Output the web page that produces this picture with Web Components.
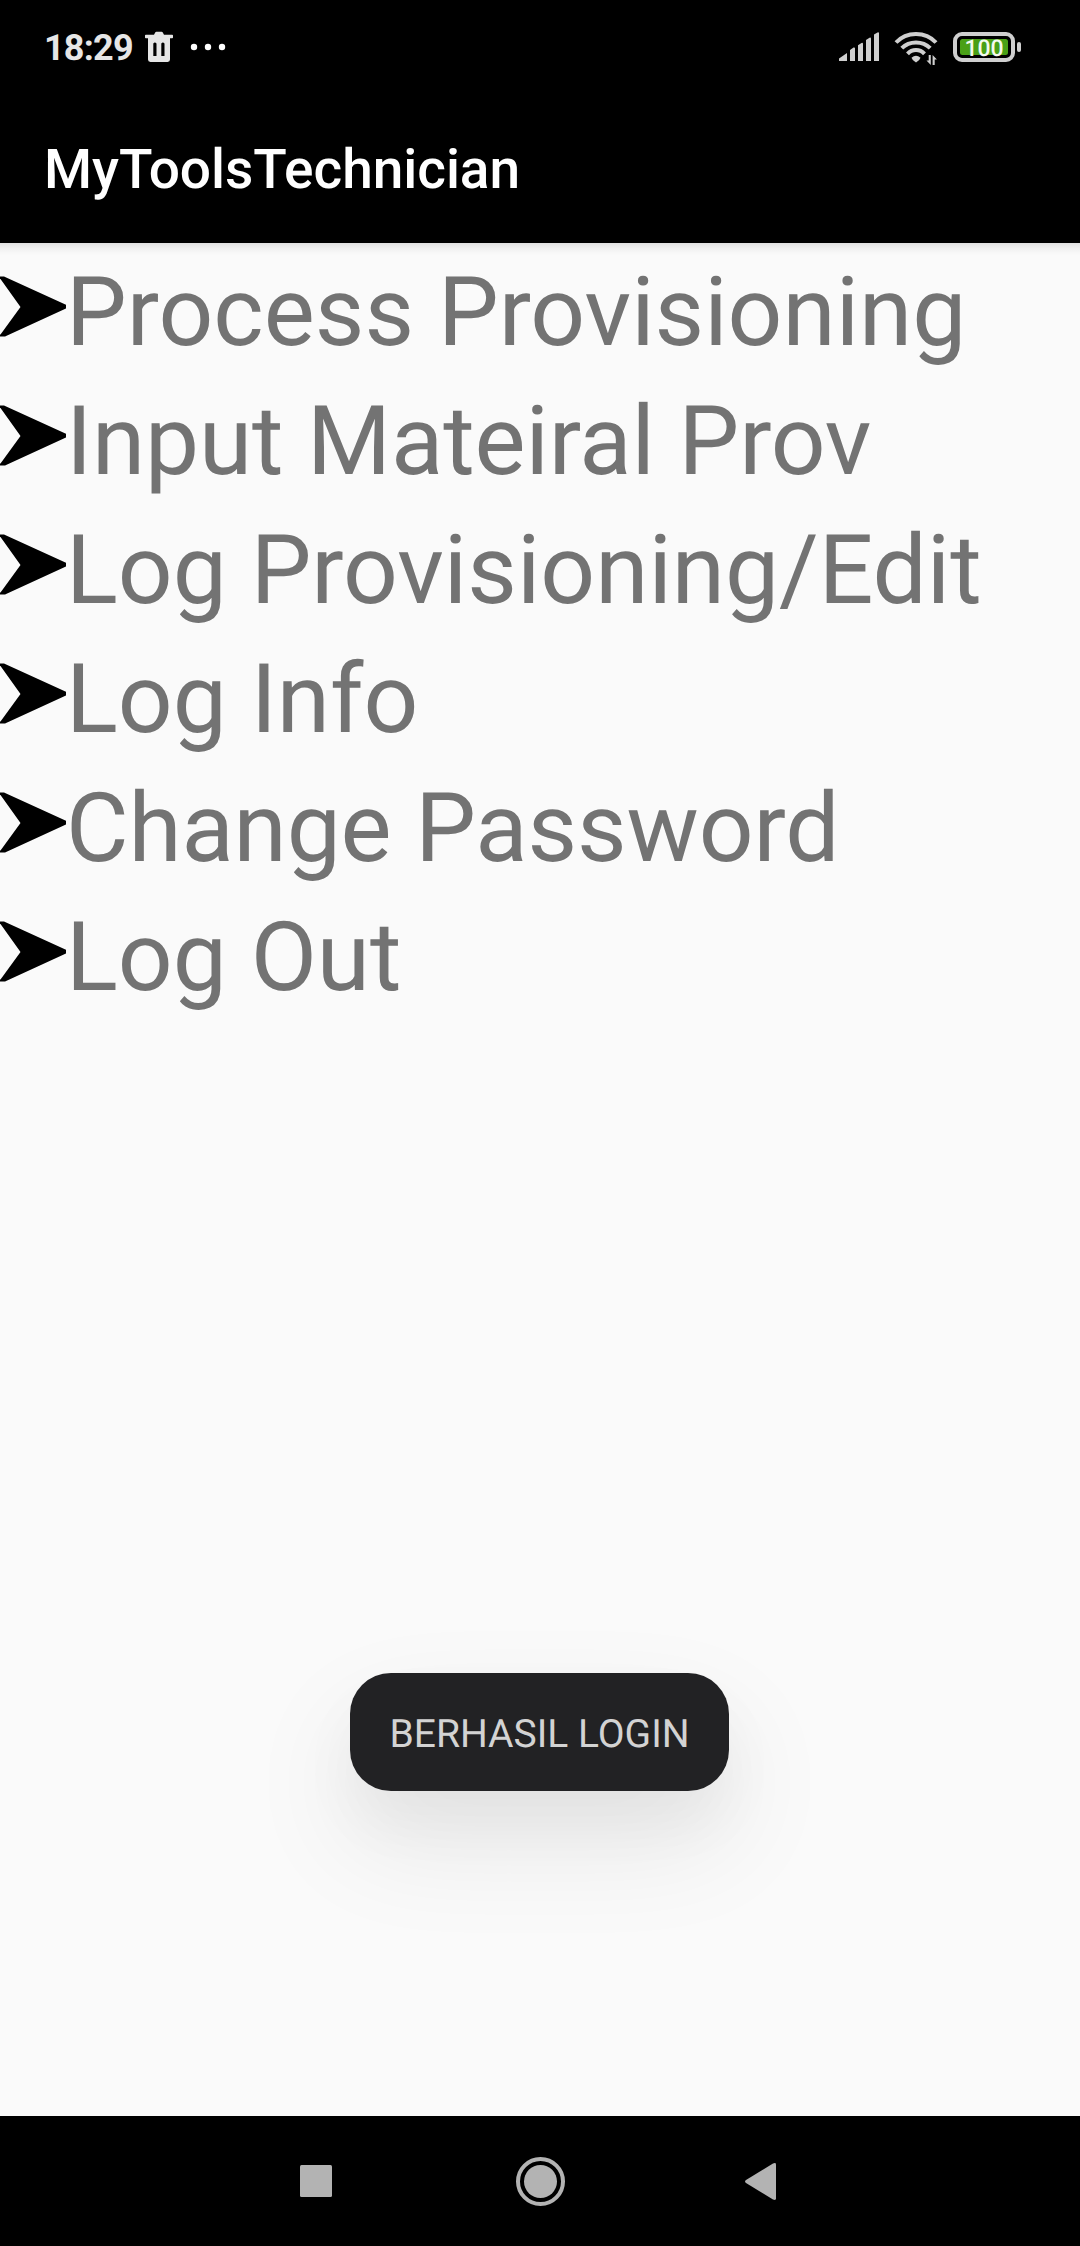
<!DOCTYPE html>
<html lang="id">
<head>
<meta charset="utf-8">
<title>MyToolsTechnician</title>
<style>
html,body{margin:0;padding:0;background:#fafafa}
body{width:1080px;height:2246px;overflow:hidden;font-family:Roboto,"Noto Sans",sans-serif;text-rendering:geometricPrecision}
</style>
</head>
<body>
<phone-screen>
  <status-bar slot="top" time="18:29" battery="100"></status-bar>
  <app-bar slot="top">MyToolsTechnician</app-bar>
  <menu-row>Process Provisioning</menu-row>
  <menu-row tight>Input Mateiral Prov</menu-row>
  <menu-row>Log Provisioning/Edit</menu-row>
  <menu-row>Log Info</menu-row>
  <menu-row tight>Change Password</menu-row>
  <menu-row>Log Out</menu-row>
  <toast-message slot="toast">BERHASIL LOGIN</toast-message>
  <nav-bar slot="bottom"></nav-bar>
</phone-screen>
<script>
const define = (name, html) => customElements.define(name, class extends HTMLElement {
  constructor() {
    super();
    const fill = html.replace(/\{(\w+)\}/g, (_, key) => this.getAttribute(key) || '');
    this.attachShadow({ mode: 'open' }).innerHTML = fill;
  }
});

define('phone-screen', `
<style>
:host{display:flex;flex-direction:column;position:relative;width:1080px;height:2246px;background:#fafafa}
header{position:relative;flex:none}
header::after{content:"";position:absolute;left:0;right:0;top:100%;height:13px;background:linear-gradient(rgba(0,0,0,.1),rgba(0,0,0,.045) 40%,rgba(0,0,0,.012) 75%,transparent)}
main{flex:1;display:flex;flex-direction:column}
.toast{position:absolute;left:0;right:1px;top:1673px;display:flex;justify-content:center}
</style>
<header><slot name="top"></slot></header>
<main><slot></slot></main>
<div class="toast"><slot name="toast"></slot></div>
<slot name="bottom"></slot>`);

define('status-bar', `
<style>
:host{display:flex;box-sizing:border-box;height:89px;background:#000;padding:0 59px 0 44px;align-items:flex-start;justify-content:space-between}
.side{display:flex;align-items:flex-start}
time{font-size:36px;line-height:42px;font-weight:700;letter-spacing:-.8px;color:#e6e6e6;margin-top:27px;width:89px;white-space:nowrap}
svg{display:block;margin-top:27px}
svg text{font-family:Roboto,sans-serif;font-weight:500;font-size:23px}
</style>
<div class="side">
  <time>{time}</time>
  <svg width="110" height="40" viewBox="133 27 110 40">
    <path fill="#e6e6e6" fill-rule="evenodd" d="M145 35.5q0-.8.8-.8H154l1.200-2.200q.4-.7 1.200-.7h5.200q.8 0 1.200.7l1.200 2.200h8.200q.8 0 .8.800v2q0 .8-.8.8H170V59.500q0 2.400-2.400 2.400H150.400q-2.400 0-2.400-2.400V38.300h-2.200q-.8 0-.8-.8zM153.300 43.500v12.500h3.200V43.500q-1.600-2-3.200 0zM161.300 43.500v12.500h3.200V43.500q-1.600-2-3.200 0z"/>
    <g fill="#fff"><circle cx="194" cy="47" r="3.200"/><circle cx="208" cy="47" r="3.200"/><circle cx="222" cy="47" r="3.200"/></g>
  </svg>
</div>
<div class="side">
  <svg width="186" height="40" viewBox="835 27 186 40">
    <path fill="#cfcfcf" d="M839 61v-2.500l8-5.500V61zM850 61V50l3.500-2.400q1.500-.6 1.500 1V61zM858 61V45.200l3.500-2.200q1.500-.6 1.500 1V61zM866 61V40l3.500-2.300q1.500-.6 1.500 1V61zM874 61V34.600l3.500-2.200q1.500-.6 1.500 1V61z"/>
    <g fill="none" stroke="#cfcfcf" stroke-width="4">
      <path d="M896 42.500Q904 34 916 34t20 8.500"/>
      <path d="M901.800 48.200Q907.500 42.500 916 42.500t14.200 5.700"/>
      <path d="M907.500 53.800Q911 50 916 50t8.500 3.800"/>
    </g>
    <path fill="#cfcfcf" d="M911.500 57.800Q916 53.800 920.500 57.800 920 60.200 916 62.400 912 60.200 911.500 57.800z"/>
    <path fill="#cfcfcf" d="M928.700 55h2.100V65l-4.300-4.400h2.200zM932.600 65V55l4.300 4.400h-2.200V65z"/>
    <rect x="955" y="34" width="58" height="26" rx="7" fill="none" stroke="#cfcfcf" stroke-width="4"/>
    <rect x="1017" y="42" width="4" height="10" rx="2" fill="#cfcfcf"/>
    <rect x="960" y="39" width="48" height="16" rx="2.500" fill="#49a016"/>
    <text x="964.500" y="56" fill="#f4faef" textLength="39">{battery}</text>
  </svg>
</div>`);

define('app-bar', `
<style>
:host{display:flex;align-items:center;box-sizing:border-box;height:154px;padding:8px 44px 0;background:#000;color:#fff;font-size:55px;font-weight:500;line-height:64px;letter-spacing:-.05px}
</style>
<span><slot></slot></span>`);

define('menu-row', `
<style>
:host{display:flex;align-items:flex-start;height:129px;flex:none;color:#737373;font-size:96.25px;line-height:113px;white-space:nowrap}
:host([tight]){letter-spacing:-.13px}
svg{display:block;flex:none;margin-top:33px}
path{filter:blur(.6px)}
span{margin-top:14px}
</style>
<svg width="66" height="61" viewBox="0 0 66 61"><path d="M-2 .5H4L66.500 29V32.300L5 60.500H-2V58.500H.5L20.500 31 .5 3H-2z"/></svg>
<span><slot></slot></span>`);

define('toast-message', `
<style>
:host{display:flex;align-items:center;justify-content:center;box-sizing:border-box;width:379px;height:118px;padding-top:3px;border-radius:41px;background:#222224;color:#d3d3d3;font-size:39px;line-height:46px;white-space:nowrap;box-shadow:0 50px 110px 6px rgba(0,0,0,.075),0 32px 60px rgba(0,0,0,.04)}
</style>
<span><slot></slot></span>`);

define('nav-bar', `
<style>
:host{display:flex;align-items:center;box-sizing:border-box;height:130px;padding-left:300px;background:#000;flex:none}
svg{display:block;fill:#b3b3b3}
.home{margin:1px 180px 0 184px}
</style>
<svg width="32" height="32"><rect width="32" height="32" rx="1.500"/></svg>
<svg class="home" width="49" height="49"><circle cx="24.500" cy="24.500" r="22.500" fill="none" stroke="#b3b3b3" stroke-width="4"/><circle cx="24.500" cy="24.500" r="16.500"/></svg>
<svg width="31" height="37"><path d="M1 17 28 .5Q31-.8 31 1.500V35.500Q31 37.800 28 36.500L1 20Q-1 18.500 1 17z"/></svg>`);
</script>
</body>
</html>
